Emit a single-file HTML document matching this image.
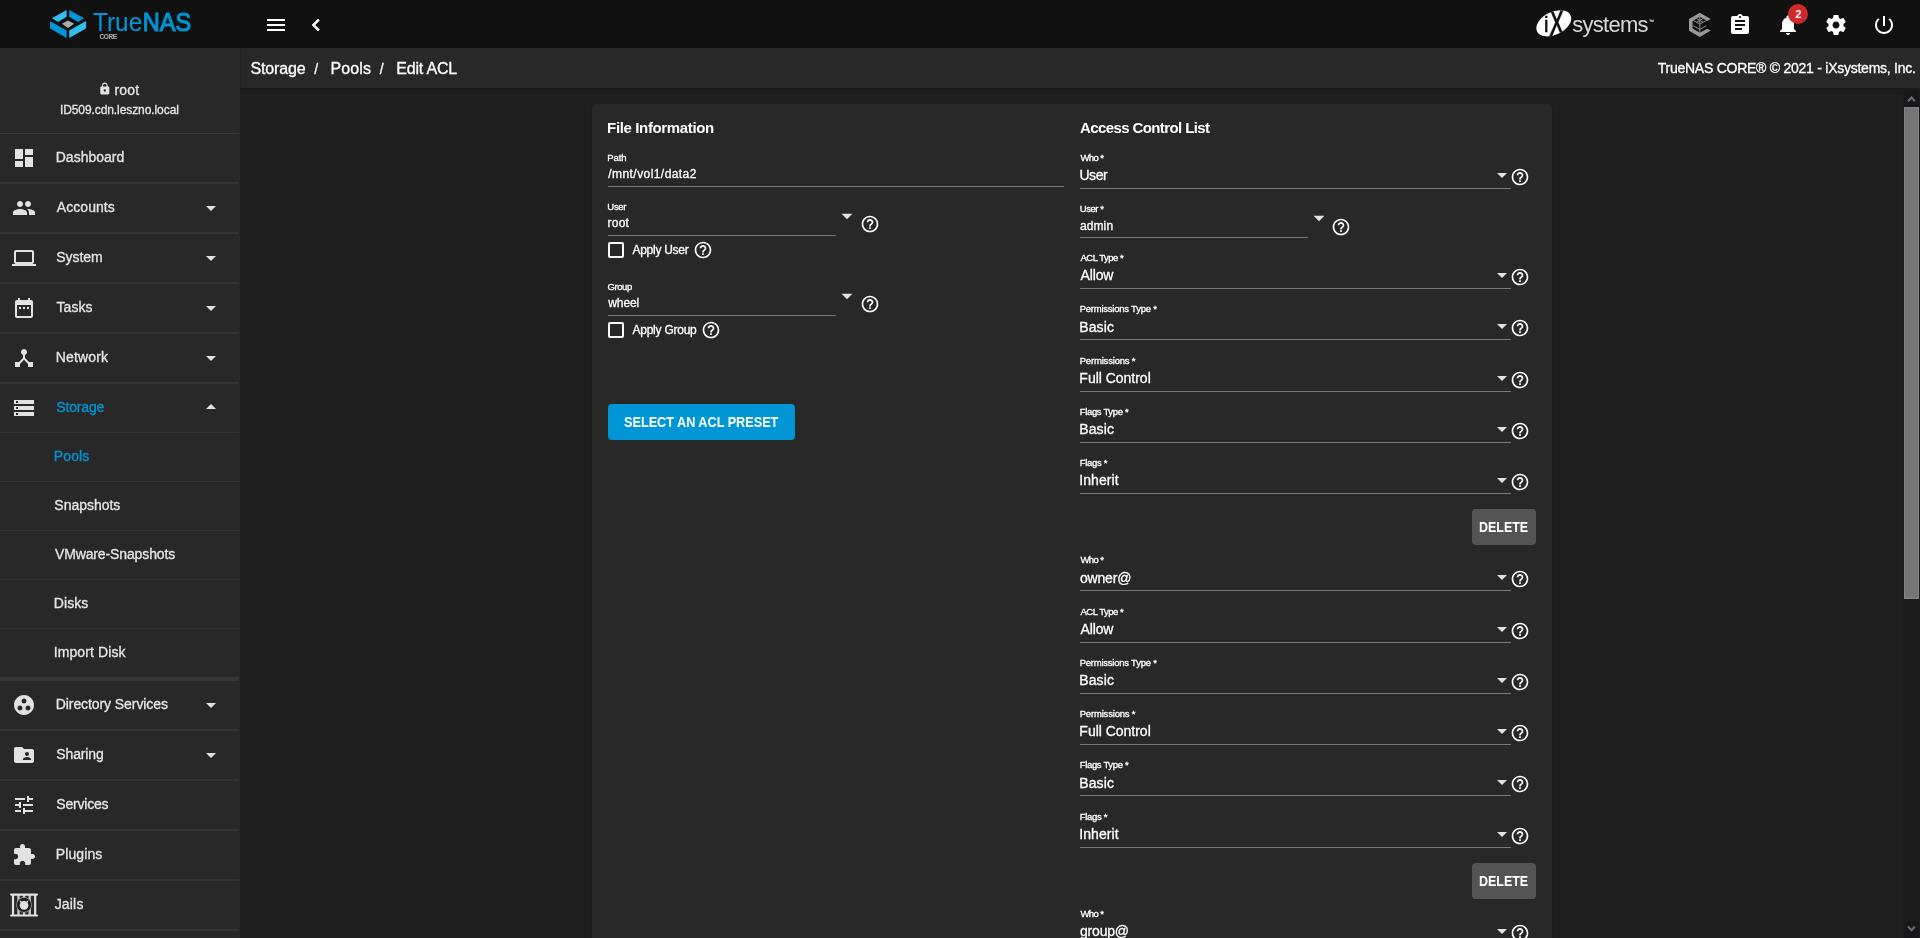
<!DOCTYPE html>
<html lang="en"><head><meta charset="utf-8"><title>TrueNAS - Edit ACL</title>
<style>
*{box-sizing:content-box}
html,body{margin:0;padding:0}
body{width:1920px;height:938px;overflow:hidden;position:relative;background:#1e1e1e;color:#fff;font-family:"Liberation Sans",sans-serif}
#bg,#app{position:absolute;left:0;top:0;width:1920px;height:938px}
#app{transform:translateZ(0)}
.t{position:absolute;white-space:nowrap;line-height:1;-webkit-text-stroke:0.3px currentColor}
.r,.i{position:absolute;display:block}
</style></head>
<body>
<div id="bg">
<div class="r" style="left:240px;top:48px;width:1680px;height:40px;background:#282828;box-shadow:0 1px 3px rgba(0,0,0,.35);"></div>
<div class="r" style="left:239.5px;top:48px;width:1.5px;height:40px;background:#242424;"></div>
<div class="r" style="left:0px;top:0px;width:1920px;height:48px;background:#111;"></div>
<div class="r" style="left:0px;top:48px;width:239.5px;height:890px;background:#282828;"></div>
<div class="r" style="left:592px;top:104px;width:960px;height:860px;background:#282828;border-radius:5px;box-shadow:0 2px 1px -1px rgba(0,0,0,.2),0 1px 1px 0 rgba(0,0,0,.14),0 1px 3px 0 rgba(0,0,0,.12);"></div>
<svg class="i" style="left:48px;top:8px" width="40" height="32" viewBox="48 8 40 32">
<polygon fill="#31beec" points="51.9,18.3 66.6,10 66.6,16.8 58.1,21.9"/>
<polygon fill="#0095d5" points="69.2,10 84.1,18.3 78.1,21.9 69.2,16.8"/>
<polygon fill="#0095d5" points="50,21.1 66.6,30.4 66.6,38.1 50,28.5"/>
<polygon fill="#31beec" points="69.2,30.4 86,21.1 86,28.5 69.2,38.1"/>
<polygon fill="#aeadae" points="61.9,23.8 67.9,20.4 74.1,23.8 67.9,27.9"/>
</svg>
<svg class="i" style="left:264px;top:13px" width="24" height="24" viewBox="0 0 24 24"><path fill="#fff" d="M3 18h18v-2H3v2zm0-5h18v-2H3v2zm0-7v2h18V6H3z"/></svg>
<svg class="i" style="left:303.500px;top:13px" width="24" height="24" viewBox="0 0 24 24"><path fill="#fff" stroke="#fff" stroke-width=".700" d="M15.41 7.41L14 6l-6 6 6 6 1.41-1.41L10.83 12z"/></svg>
<svg class="i" style="left:1534px;top:6px;transform:translateZ(0)" width="40" height="36" viewBox="1534 6 40 36">
<defs><clipPath id="ixc"><ellipse cx="1553.8" cy="23.3" rx="18.600" ry="11.400" transform="rotate(-26 1553.8 23.3)"/></clipPath></defs>
<ellipse cx="1553.8" cy="23.3" rx="18.600" ry="11.400" fill="#fff" transform="rotate(-26 1553.8 23.3)"/>
<g clip-path="url(#ixc)" font-family="Liberation Sans, sans-serif" fill="#111" stroke="#111" text-anchor="middle">
<text x="1546.300" y="31.900" font-size="22" stroke-width=".350">i</text>
<text transform="translate(1556.600 39.100) scale(.600 1)" x="0" y="0" font-size="46" stroke-width=".300">X</text>
</g>
</svg>
<svg class="i" style="left:1686px;top:10px" width="28" height="30" viewBox="1686 10 28 30">
<path fill="#999" d="M1699.800 12.700L1710.700 19L1707.300 20.950L1699.800 16.850L1692.600 21V28.600L1699.800 32.750L1707.300 28.650L1710.700 30.600L1699.800 36.900L1689 30.700V18.900Z"/>
<path fill="none" stroke="#8c8c8c" stroke-width="1" d="M1699.800 17V33.500M1693.200 20.400L1699.800 24.100L1706.400 20.400M1696.500 18.600L1703.100 22.200M1703.100 18.600L1696.500 22.200M1693.200 25.750L1699.800 29.400L1706.400 25.750"/>
</svg>
<svg class="i" style="left:1728px;top:13px" width="24" height="24" viewBox="0 0 24 24"><path fill="#fff" d="M19 3h-4.180C14.4 1.84 13.3 1 12 1c-1.3 0-2.4.84-2.82 2H5c-1.1 0-2 .9-2 2v14c0 1.1.9 2 2 2h14c1.1 0 2-.9 2-2V5c0-1.1-.9-2-2-2zm-7 0c.55 0 1 .45 1 1s-.45 1-1 1-1-.45-1-1 .45-1 1-1zm2 14H7v-2h7v2zm3-4H7v-2h10v2zm0-4H7V7h10v2z"/></svg>
<svg class="i" style="left:1776px;top:13px" width="24" height="24" viewBox="0 0 24 24"><path fill="#fff" d="M12 22c1.1 0 2-.9 2-2h-4c0 1.100.89 2 2 2zm6-6v-5c0-3.070-1.64-5.64-4.5-6.32V4c0-.83-.67-1.5-1.5-1.5s-1.5.67-1.5 1.5v.68C7.63 5.36 6 7.92 6 11v5l-2 2v1h16v-1l-2-2z"/></svg>
<div class="r" style="left:1787.8px;top:4px;width:20.4px;height:20.400px;border-radius:50%;background:#d1282c"></div>
<svg class="i" style="left:1824px;top:13px" width="24" height="24" viewBox="0 0 24 24"><path fill="#fff" d="M19.43 12.98c.04-.32.07-.64.07-.98s-.03-.66-.07-.98l2.110-1.65c.19-.15.24-.42.12-.64l-2-3.46c-.12-.22-.39-.3-.61-.22l-2.49 1c-.52-.4-1.08-.73-1.69-.98l-.38-2.65C14.460 2.18 14.25 2 14 2h-4c-.25 0-.46.18-.49.42l-.38 2.650c-.61.25-1.17.59-1.69.98l-2.490-1c-.23-.09-.49 0-.61.22l-2 3.460c-.13.22-.07.49.12.64l2.110 1.650c-.04.32-.07.65-.07.98s.03.66.07.98l-2.110 1.650c-.19.15-.24.42-.12.64l2 3.460c.12.22.39.3.61.22l2.490-1c.52.4 1.08.73 1.69.98l.38 2.650c.03.24.24.42.49.42h4c.25 0 .46-.18.49-.42l.38-2.650c.61-.25 1.17-.59 1.69-.98l2.490 1c.23.09.49 0 .61-.22l2-3.460c.12-.22.07-.49-.12-.64l-2.110-1.650zM12 15.500c-1.930 0-3.500-1.570-3.500-3.500s1.570-3.500 3.500-3.500 3.500 1.570 3.500 3.500-1.570 3.500-3.500 3.500z"/></svg>
<svg class="i" style="left:1872px;top:13px" width="24" height="24" viewBox="0 0 24 24"><path fill="#fff" d="M13 3h-2v10h2V3zm4.83 2.17l-1.42 1.42C17.99 7.86 19 9.81 19 12c0 3.87-3.13 7-7 7s-7-3.13-7-7c0-2.19 1.01-4.14 2.58-5.42L6.17 5.17C4.23 6.82 3 9.26 3 12c0 4.97 4.03 9 9 9s9-4.03 9-9c0-2.74-1.23-5.18-3.17-6.83z"/></svg>
<svg class="i" style="left:97.6px;top:81.9px" width="13.6" height="13.6" viewBox="0 0 24 24"><path fill="#e2e2e2" d="M18 8h-1V6c0-2.76-2.24-5-5-5S7 3.240 7 6v2H6c-1.1 0-2 .9-2 2v10c0 1.1.9 2 2 2h12c1.1 0 2-.9 2-2V10c0-1.1-.9-2-2-2zm-6 9c-1.1 0-2-.9-2-2s.9-2 2-2 2 .9 2 2-.9 2-2 2zm3.1-9H8.9V6c0-1.71 1.39-3.1 3.1-3.1 1.71 0 3.1 1.39 3.1 3.1v2z"/></svg>
<div class="r" style="left:0px;top:133px;width:239px;height:1px;background:#373737;"></div>
<svg class="i" style="left:12px;top:146px" width="24" height="24" viewBox="0 0 24 24"><path fill="#e2e2e2" d="M3 13h8V3H3v10zm0 8h8v-6H3v6zm10 0h8V11h-8v10zm0-18v6h8V3h-8z"/></svg>
<svg class="i" style="left:12px;top:196px" width="24" height="24" viewBox="0 0 24 24"><path fill="#e2e2e2" d="M16 11c1.66 0 2.99-1.34 2.99-3S17.66 5 16 5c-1.66 0-3 1.34-3 3s1.34 3 3 3zm-8 0c1.66 0 2.99-1.34 2.99-3S9.66 5 8 5C6.34 5 5 6.34 5 8s1.34 3 3 3zm0 2c-2.33 0-7 1.17-7 3.5V19h14v-2.5c0-2.33-4.67-3.5-7-3.5zm8 0c-.29 0-.62.02-.97.05 1.16.84 1.97 1.97 1.97 3.45V19h6v-2.5c0-2.33-4.67-3.5-7-3.5z"/></svg>
<svg class="i" style="left:199px;top:196px" width="24" height="24" viewBox="0 0 24 24"><path fill="#e2e2e2" d="M7 10l5 5 5-5z"/></svg>
<svg class="i" style="left:12px;top:246px" width="24" height="24" viewBox="0 0 24 24"><path fill="#e2e2e2" d="M20 18c1.1 0 2-.9 2-2V6c0-1.1-.9-2-2-2H4c-1.1 0-2 .9-2 2v10c0 1.1.9 2 2 2H0v2h24v-2h-4zM4 6h16v10H4V6z"/></svg>
<svg class="i" style="left:199px;top:246px" width="24" height="24" viewBox="0 0 24 24"><path fill="#e2e2e2" d="M7 10l5 5 5-5z"/></svg>
<svg class="i" style="left:12px;top:296px" width="24" height="24" viewBox="0 0 24 24"><path fill="#e2e2e2" d="M9 11H7v2h2v-2zm4 0h-2v2h2v-2zm4 0h-2v2h2v-2zm2-7h-1V2h-2v2H8V2H6v2H5c-1.11 0-1.99.9-1.99 2L3 20c0 1.1.89 2 2 2h14c1.1 0 2-.9 2-2V6c0-1.1-.9-2-2-2zm0 16H5V9h14v11z"/></svg>
<svg class="i" style="left:199px;top:296px" width="24" height="24" viewBox="0 0 24 24"><path fill="#e2e2e2" d="M7 10l5 5 5-5z"/></svg>
<svg class="i" style="left:12px;top:346px" width="24" height="24" viewBox="0 0 24 24"><path fill="#e2e2e2" d="M17 16l-4-4V8.82C14.16 8.4 15 7.3 15 6c0-1.66-1.34-3-3-3S9 4.34 9 6c0 1.3.84 2.4 2 2.82V12l-4 4H3v5h5v-3.05l4-4.2 4 4.2V21h5v-5h-4z"/></svg>
<svg class="i" style="left:199px;top:346px" width="24" height="24" viewBox="0 0 24 24"><path fill="#e2e2e2" d="M7 10l5 5 5-5z"/></svg>
<svg class="i" style="left:12px;top:396px" width="24" height="24" viewBox="0 0 24 24"><path fill="#e2e2e2" d="M2 20h20v-4H2v4zm2-3h2v2H4v-2zM2 4v4h20V4H2zm4 3H4V5h2v2zm-4 7h20v-4H2v4zm2-3h2v2H4v-2z"/></svg>
<svg class="i" style="left:199px;top:395px" width="24" height="24" viewBox="0 0 24 24"><path fill="#e2e2e2" d="M7 14l5-5 5 5z"/></svg>
<div class="r" style="left:0px;top:182px;width:239px;height:2px;background:#343434;"></div>
<div class="r" style="left:0px;top:232px;width:239px;height:2px;background:#343434;"></div>
<div class="r" style="left:0px;top:282px;width:239px;height:2px;background:#343434;"></div>
<div class="r" style="left:0px;top:332px;width:239px;height:2px;background:#343434;"></div>
<div class="r" style="left:0px;top:382px;width:239px;height:2px;background:#343434;"></div>
<div class="r" style="left:0px;top:432px;width:239px;height:1px;background:#343434;"></div>
<div class="r" style="left:0px;top:481px;width:239px;height:1px;background:#343434;"></div>
<div class="r" style="left:0px;top:530px;width:239px;height:1px;background:#343434;"></div>
<div class="r" style="left:0px;top:579px;width:239px;height:1px;background:#343434;"></div>
<div class="r" style="left:0px;top:628px;width:239px;height:1px;background:#343434;"></div>
<div class="r" style="left:0px;top:677px;width:239px;height:4px;background:#363636;"></div>
<svg class="i" style="left:12px;top:693px" width="24" height="24" viewBox="0 0 24 24"><path fill="#e2e2e2" d="M12 2C6.48 2 2 6.48 2 12s4.48 10 10 10 10-4.48 10-10S17.52 2 12 2zM8 17.5c-1.38 0-2.5-1.12-2.5-2.5s1.12-2.5 2.5-2.5 2.5 1.12 2.5 2.5-1.12 2.5-2.5 2.5zM9.5 8c0-1.38 1.12-2.5 2.5-2.5s2.5 1.12 2.5 2.5-1.12 2.5-2.5 2.5S9.5 9.38 9.5 8zm6.5 9.5c-1.38 0-2.5-1.12-2.5-2.5s1.12-2.5 2.5-2.5 2.5 1.12 2.5 2.5-1.12 2.5-2.5 2.5z"/></svg>
<svg class="i" style="left:199px;top:693px" width="24" height="24" viewBox="0 0 24 24"><path fill="#e2e2e2" d="M7 10l5 5 5-5z"/></svg>
<svg class="i" style="left:12px;top:743px" width="24" height="24" viewBox="0 0 24 24"><path fill="#e2e2e2" d="M20 6h-8l-2-2H4c-1.1 0-1.99.9-1.99 2L2 18c0 1.1.9 2 2 2h16c1.1 0 2-.9 2-2V8c0-1.1-.9-2-2-2zm-5 3c1.1 0 2 .9 2 2s-.9 2-2 2-2-.9-2-2 .9-2 2-2zm4 8h-8v-1c0-1.33 2.67-2 4-2s4 .67 4 2v1z"/></svg>
<svg class="i" style="left:199px;top:743px" width="24" height="24" viewBox="0 0 24 24"><path fill="#e2e2e2" d="M7 10l5 5 5-5z"/></svg>
<svg class="i" style="left:12px;top:793px" width="24" height="24" viewBox="0 0 24 24"><path fill="#e2e2e2" d="M3 17v2h6v-2H3zM3 5v2h10V5H3zm10 16v-2h8v-2h-8v-2h-2v6h2zM7 9v2H3v2h4v2h2V9H7zm14 4v-2H11v2h10zm-6-4h2V7h4V5h-4V3h-2v6z"/></svg>
<svg class="i" style="left:12px;top:843px" width="24" height="24" viewBox="0 0 24 24"><path fill="#e2e2e2" d="M20.5 11H19V7c0-1.1-.9-2-2-2h-4V3.5C13 2.12 11.88 1 10.5 1S8 2.12 8 3.5V5H4c-1.1 0-1.99.9-1.99 2v3.8H3.5c1.49 0 2.7 1.21 2.7 2.7s-1.21 2.7-2.7 2.7H2V20c0 1.1.9 2 2 2h3.8v-1.5c0-1.49 1.21-2.7 2.7-2.7 1.49 0 2.7 1.21 2.7 2.7V22H17c1.1 0 2-.9 2-2v-4h1.5c1.38 0 2.5-1.12 2.5-2.5S21.88 11 20.5 11z"/></svg>
<div class="r" style="left:0px;top:729px;width:239px;height:2px;background:#343434;"></div>
<div class="r" style="left:0px;top:779px;width:239px;height:2px;background:#343434;"></div>
<div class="r" style="left:0px;top:829px;width:239px;height:2px;background:#343434;"></div>
<div class="r" style="left:0px;top:879px;width:239px;height:2px;background:#343434;"></div>
<div class="r" style="left:0px;top:929px;width:239px;height:2px;background:#343434;"></div>
<svg class="i" style="left:8px;top:890px" width="32" height="30" viewBox="8 890 32 30">
<g fill="#e2e2e2">
<rect x="11.900" y="895" width="2.200" height="20"/>
<rect x="17.300" y="895" width="2.400" height="20" fill="#c9c9c9"/>
<rect x="22.900" y="895" width="2.300" height="20" fill="#c9c9c9"/>
<rect x="28.500" y="895" width="2.400" height="20" fill="#c9c9c9"/>
<rect x="34.050" y="895" width="2.200" height="20"/>
<rect x="10" y="893.500" width="28.100" height="2.200" rx="1.100"/>
<rect x="10" y="914.400" width="28.100" height="2.200" rx="1.100"/>
</g>
<circle cx="24.050" cy="904.900" r="7.500" fill="#1c1c1c" stroke="#c4c4c4" stroke-width=".600"/>
<path fill="#e2e2e2" d="M19.600 900.600l2.300 .700l-1.500 1.800zM28.500 900.600l-2.300 .700l1.500 1.800z"/>
<circle cx="24.050" cy="905.300" r="4.350" fill="#e2e2e2"/>
</svg>
<div class="r" style="left:1903px;top:88px;width:17px;height:850px;background:#1c1c1c;"></div>
<div class="r" style="left:1904px;top:90px;width:15px;height:17px;background:#18181a;"></div>
<div class="r" style="left:1904px;top:921px;width:15px;height:17px;background:#18181a;"></div>
<div class="r" style="left:1904px;top:107px;width:13px;height:490px;background:#767676;border:1px solid #848484;"></div>
<svg class="i" style="left:1904px;top:90px" width="15" height="17" viewBox="1904 90 15 17"><path d="M1908 101.200l3.450-3.600 3.450 3.600" fill="none" stroke="#6a6a6a" stroke-width="2.100"/></svg>
<svg class="i" style="left:1904px;top:921px" width="15" height="17" viewBox="1904 921 15 17"><path d="M1908 926.600l3.450 3.600 3.450-3.600" fill="none" stroke="#6a6a6a" stroke-width="2.100"/></svg>
<div class="r" style="left:608px;top:186px;width:456px;height:1px;background:#777;"></div>
<div class="r" style="left:608px;top:235px;width:228px;height:1px;background:#777;"></div>
<svg class="i" style="left:834.4px;top:202.9px" width="26" height="26" viewBox="0 0 24 24"><path fill="#e2e2e2" d="M7 10l5 5 5-5z"/></svg>
<svg class="i" style="left:859.8px;top:214.0px" width="20" height="20" viewBox="0 0 24 24"><path fill="#fff" d="M11 18h2v-2h-2v2zm1-16C6.48 2 2 6.48 2 12s4.48 10 10 10 10-4.48 10-10S17.52 2 12 2zm0 18c-4.41 0-8-3.59-8-8s3.59-8 8-8 8 3.59 8 8-3.59 8-8 8zm0-14c-2.21 0-4 1.79-4 4h2c0-1.1.9-2 2-2s2 .9 2 2c0 2-3 1.75-3 5h2c0-2.25 3-2.5 3-5 0-2.21-1.79-4-4-4z"/></svg>
<div class="r" style="left:608px;top:315px;width:228px;height:1px;background:#777;"></div>
<svg class="i" style="left:834.4px;top:282.9px" width="26" height="26" viewBox="0 0 24 24"><path fill="#e2e2e2" d="M7 10l5 5 5-5z"/></svg>
<svg class="i" style="left:859.8px;top:294.0px" width="20" height="20" viewBox="0 0 24 24"><path fill="#fff" d="M11 18h2v-2h-2v2zm1-16C6.48 2 2 6.48 2 12s4.48 10 10 10 10-4.48 10-10S17.52 2 12 2zm0 18c-4.41 0-8-3.59-8-8s3.59-8 8-8 8 3.59 8 8-3.59 8-8 8zm0-14c-2.21 0-4 1.79-4 4h2c0-1.1.9-2 2-2s2 .9 2 2c0 2-3 1.75-3 5h2c0-2.25 3-2.5 3-5 0-2.21-1.79-4-4-4z"/></svg>
<div class="r" style="left:608px;top:242px;width:12px;height:12px;border:2px solid #fff;border-radius:2px"></div>
<svg class="i" style="left:692.6px;top:240.0px" width="20" height="20" viewBox="0 0 24 24"><path fill="#fff" d="M11 18h2v-2h-2v2zm1-16C6.48 2 2 6.48 2 12s4.48 10 10 10 10-4.48 10-10S17.52 2 12 2zm0 18c-4.41 0-8-3.59-8-8s3.59-8 8-8 8 3.59 8 8-3.59 8-8 8zm0-14c-2.21 0-4 1.79-4 4h2c0-1.1.9-2 2-2s2 .9 2 2c0 2-3 1.75-3 5h2c0-2.25 3-2.5 3-5 0-2.21-1.79-4-4-4z"/></svg>
<div class="r" style="left:608px;top:322px;width:12px;height:12px;border:2px solid #fff;border-radius:2px"></div>
<svg class="i" style="left:700.6px;top:320.0px" width="20" height="20" viewBox="0 0 24 24"><path fill="#fff" d="M11 18h2v-2h-2v2zm1-16C6.48 2 2 6.48 2 12s4.48 10 10 10 10-4.48 10-10S17.52 2 12 2zm0 18c-4.41 0-8-3.59-8-8s3.59-8 8-8 8 3.59 8 8-3.59 8-8 8zm0-14c-2.21 0-4 1.79-4 4h2c0-1.1.9-2 2-2s2 .9 2 2c0 2-3 1.75-3 5h2c0-2.25 3-2.5 3-5 0-2.21-1.79-4-4-4z"/></svg>
<div class="r" style="left:608px;top:404px;width:187px;height:36px;background:#0095d5;border-radius:4px;"></div>
<div class="r" style="left:1080px;top:188px;width:431px;height:1px;background:#777;"></div>
<div class="r" style="left:1497px;top:173px;width:0;height:0;border-left:5px solid transparent;border-right:5px solid transparent;border-top:5px solid #e2e2e2"></div>
<svg class="i" style="left:1510.1px;top:167.0px" width="20" height="20" viewBox="0 0 24 24"><path fill="#fff" d="M11 18h2v-2h-2v2zm1-16C6.48 2 2 6.48 2 12s4.48 10 10 10 10-4.48 10-10S17.52 2 12 2zm0 18c-4.41 0-8-3.59-8-8s3.59-8 8-8 8 3.59 8 8-3.59 8-8 8zm0-14c-2.21 0-4 1.79-4 4h2c0-1.1.9-2 2-2s2 .9 2 2c0 2-3 1.75-3 5h2c0-2.25 3-2.5 3-5 0-2.21-1.79-4-4-4z"/></svg>
<div class="r" style="left:1080px;top:237px;width:228px;height:1px;background:#777;"></div>
<svg class="i" style="left:1306.1px;top:205px" width="26" height="26" viewBox="0 0 24 24"><path fill="#e2e2e2" d="M7 10l5 5 5-5z"/></svg>
<svg class="i" style="left:1331.0px;top:217.0px" width="20" height="20" viewBox="0 0 24 24"><path fill="#fff" d="M11 18h2v-2h-2v2zm1-16C6.48 2 2 6.48 2 12s4.48 10 10 10 10-4.48 10-10S17.52 2 12 2zm0 18c-4.41 0-8-3.59-8-8s3.59-8 8-8 8 3.59 8 8-3.59 8-8 8zm0-14c-2.21 0-4 1.79-4 4h2c0-1.1.9-2 2-2s2 .9 2 2c0 2-3 1.75-3 5h2c0-2.25 3-2.5 3-5 0-2.21-1.79-4-4-4z"/></svg>
<div class="r" style="left:1080px;top:288px;width:431px;height:1px;background:#777;"></div>
<div class="r" style="left:1497px;top:273px;width:0;height:0;border-left:5px solid transparent;border-right:5px solid transparent;border-top:5px solid #e2e2e2"></div>
<svg class="i" style="left:1510.1px;top:267.0px" width="20" height="20" viewBox="0 0 24 24"><path fill="#fff" d="M11 18h2v-2h-2v2zm1-16C6.48 2 2 6.48 2 12s4.48 10 10 10 10-4.48 10-10S17.52 2 12 2zm0 18c-4.41 0-8-3.59-8-8s3.59-8 8-8 8 3.59 8 8-3.59 8-8 8zm0-14c-2.21 0-4 1.79-4 4h2c0-1.1.9-2 2-2s2 .9 2 2c0 2-3 1.75-3 5h2c0-2.25 3-2.5 3-5 0-2.21-1.79-4-4-4z"/></svg>
<div class="r" style="left:1080px;top:339px;width:431px;height:1px;background:#777;"></div>
<div class="r" style="left:1497px;top:324px;width:0;height:0;border-left:5px solid transparent;border-right:5px solid transparent;border-top:5px solid #e2e2e2"></div>
<svg class="i" style="left:1510.1px;top:318.0px" width="20" height="20" viewBox="0 0 24 24"><path fill="#fff" d="M11 18h2v-2h-2v2zm1-16C6.48 2 2 6.48 2 12s4.48 10 10 10 10-4.48 10-10S17.52 2 12 2zm0 18c-4.41 0-8-3.59-8-8s3.59-8 8-8 8 3.59 8 8-3.59 8-8 8zm0-14c-2.21 0-4 1.79-4 4h2c0-1.1.9-2 2-2s2 .9 2 2c0 2-3 1.75-3 5h2c0-2.25 3-2.5 3-5 0-2.21-1.79-4-4-4z"/></svg>
<div class="r" style="left:1080px;top:391px;width:431px;height:1px;background:#777;"></div>
<div class="r" style="left:1497px;top:376px;width:0;height:0;border-left:5px solid transparent;border-right:5px solid transparent;border-top:5px solid #e2e2e2"></div>
<svg class="i" style="left:1510.1px;top:370.0px" width="20" height="20" viewBox="0 0 24 24"><path fill="#fff" d="M11 18h2v-2h-2v2zm1-16C6.48 2 2 6.48 2 12s4.48 10 10 10 10-4.48 10-10S17.52 2 12 2zm0 18c-4.41 0-8-3.59-8-8s3.59-8 8-8 8 3.59 8 8-3.59 8-8 8zm0-14c-2.21 0-4 1.79-4 4h2c0-1.1.9-2 2-2s2 .9 2 2c0 2-3 1.75-3 5h2c0-2.25 3-2.5 3-5 0-2.21-1.79-4-4-4z"/></svg>
<div class="r" style="left:1080px;top:442px;width:431px;height:1px;background:#777;"></div>
<div class="r" style="left:1497px;top:427px;width:0;height:0;border-left:5px solid transparent;border-right:5px solid transparent;border-top:5px solid #e2e2e2"></div>
<svg class="i" style="left:1510.1px;top:421.0px" width="20" height="20" viewBox="0 0 24 24"><path fill="#fff" d="M11 18h2v-2h-2v2zm1-16C6.48 2 2 6.48 2 12s4.48 10 10 10 10-4.48 10-10S17.52 2 12 2zm0 18c-4.41 0-8-3.59-8-8s3.59-8 8-8 8 3.59 8 8-3.59 8-8 8zm0-14c-2.21 0-4 1.79-4 4h2c0-1.1.9-2 2-2s2 .9 2 2c0 2-3 1.75-3 5h2c0-2.25 3-2.5 3-5 0-2.21-1.79-4-4-4z"/></svg>
<div class="r" style="left:1080px;top:493px;width:431px;height:1px;background:#777;"></div>
<div class="r" style="left:1497px;top:478px;width:0;height:0;border-left:5px solid transparent;border-right:5px solid transparent;border-top:5px solid #e2e2e2"></div>
<svg class="i" style="left:1510.1px;top:472.0px" width="20" height="20" viewBox="0 0 24 24"><path fill="#fff" d="M11 18h2v-2h-2v2zm1-16C6.48 2 2 6.48 2 12s4.48 10 10 10 10-4.48 10-10S17.52 2 12 2zm0 18c-4.41 0-8-3.59-8-8s3.59-8 8-8 8 3.59 8 8-3.59 8-8 8zm0-14c-2.21 0-4 1.79-4 4h2c0-1.1.9-2 2-2s2 .9 2 2c0 2-3 1.75-3 5h2c0-2.25 3-2.5 3-5 0-2.21-1.79-4-4-4z"/></svg>
<div class="r" style="left:1472px;top:509px;width:64px;height:36px;background:#545454;border-radius:4px;"></div>
<div class="r" style="left:1080px;top:590px;width:431px;height:1px;background:#777;"></div>
<div class="r" style="left:1497px;top:575px;width:0;height:0;border-left:5px solid transparent;border-right:5px solid transparent;border-top:5px solid #e2e2e2"></div>
<svg class="i" style="left:1510.1px;top:569.0px" width="20" height="20" viewBox="0 0 24 24"><path fill="#fff" d="M11 18h2v-2h-2v2zm1-16C6.48 2 2 6.48 2 12s4.48 10 10 10 10-4.48 10-10S17.52 2 12 2zm0 18c-4.41 0-8-3.59-8-8s3.59-8 8-8 8 3.59 8 8-3.59 8-8 8zm0-14c-2.21 0-4 1.79-4 4h2c0-1.1.9-2 2-2s2 .9 2 2c0 2-3 1.75-3 5h2c0-2.25 3-2.5 3-5 0-2.21-1.79-4-4-4z"/></svg>
<div class="r" style="left:1080px;top:642px;width:431px;height:1px;background:#777;"></div>
<div class="r" style="left:1497px;top:627px;width:0;height:0;border-left:5px solid transparent;border-right:5px solid transparent;border-top:5px solid #e2e2e2"></div>
<svg class="i" style="left:1510.1px;top:621.0px" width="20" height="20" viewBox="0 0 24 24"><path fill="#fff" d="M11 18h2v-2h-2v2zm1-16C6.48 2 2 6.48 2 12s4.48 10 10 10 10-4.48 10-10S17.52 2 12 2zm0 18c-4.41 0-8-3.59-8-8s3.59-8 8-8 8 3.59 8 8-3.59 8-8 8zm0-14c-2.21 0-4 1.79-4 4h2c0-1.1.9-2 2-2s2 .9 2 2c0 2-3 1.75-3 5h2c0-2.25 3-2.5 3-5 0-2.21-1.79-4-4-4z"/></svg>
<div class="r" style="left:1080px;top:693px;width:431px;height:1px;background:#777;"></div>
<div class="r" style="left:1497px;top:678px;width:0;height:0;border-left:5px solid transparent;border-right:5px solid transparent;border-top:5px solid #e2e2e2"></div>
<svg class="i" style="left:1510.1px;top:672.0px" width="20" height="20" viewBox="0 0 24 24"><path fill="#fff" d="M11 18h2v-2h-2v2zm1-16C6.48 2 2 6.48 2 12s4.48 10 10 10 10-4.48 10-10S17.52 2 12 2zm0 18c-4.41 0-8-3.59-8-8s3.59-8 8-8 8 3.59 8 8-3.59 8-8 8zm0-14c-2.21 0-4 1.79-4 4h2c0-1.1.9-2 2-2s2 .9 2 2c0 2-3 1.75-3 5h2c0-2.25 3-2.5 3-5 0-2.21-1.79-4-4-4z"/></svg>
<div class="r" style="left:1080px;top:744px;width:431px;height:1px;background:#777;"></div>
<div class="r" style="left:1497px;top:729px;width:0;height:0;border-left:5px solid transparent;border-right:5px solid transparent;border-top:5px solid #e2e2e2"></div>
<svg class="i" style="left:1510.1px;top:723.0px" width="20" height="20" viewBox="0 0 24 24"><path fill="#fff" d="M11 18h2v-2h-2v2zm1-16C6.48 2 2 6.48 2 12s4.48 10 10 10 10-4.48 10-10S17.52 2 12 2zm0 18c-4.41 0-8-3.59-8-8s3.59-8 8-8 8 3.59 8 8-3.59 8-8 8zm0-14c-2.21 0-4 1.79-4 4h2c0-1.1.9-2 2-2s2 .9 2 2c0 2-3 1.75-3 5h2c0-2.25 3-2.5 3-5 0-2.21-1.79-4-4-4z"/></svg>
<div class="r" style="left:1080px;top:795px;width:431px;height:1px;background:#777;"></div>
<div class="r" style="left:1497px;top:780px;width:0;height:0;border-left:5px solid transparent;border-right:5px solid transparent;border-top:5px solid #e2e2e2"></div>
<svg class="i" style="left:1510.1px;top:774.0px" width="20" height="20" viewBox="0 0 24 24"><path fill="#fff" d="M11 18h2v-2h-2v2zm1-16C6.48 2 2 6.48 2 12s4.48 10 10 10 10-4.48 10-10S17.52 2 12 2zm0 18c-4.41 0-8-3.59-8-8s3.59-8 8-8 8 3.59 8 8-3.59 8-8 8zm0-14c-2.21 0-4 1.79-4 4h2c0-1.1.9-2 2-2s2 .9 2 2c0 2-3 1.75-3 5h2c0-2.25 3-2.5 3-5 0-2.21-1.79-4-4-4z"/></svg>
<div class="r" style="left:1080px;top:847px;width:431px;height:1px;background:#777;"></div>
<div class="r" style="left:1497px;top:832px;width:0;height:0;border-left:5px solid transparent;border-right:5px solid transparent;border-top:5px solid #e2e2e2"></div>
<svg class="i" style="left:1510.1px;top:826.0px" width="20" height="20" viewBox="0 0 24 24"><path fill="#fff" d="M11 18h2v-2h-2v2zm1-16C6.48 2 2 6.48 2 12s4.48 10 10 10 10-4.48 10-10S17.52 2 12 2zm0 18c-4.41 0-8-3.59-8-8s3.59-8 8-8 8 3.59 8 8-3.59 8-8 8zm0-14c-2.21 0-4 1.79-4 4h2c0-1.1.9-2 2-2s2 .9 2 2c0 2-3 1.75-3 5h2c0-2.25 3-2.5 3-5 0-2.21-1.79-4-4-4z"/></svg>
<div class="r" style="left:1472px;top:863px;width:64px;height:36px;background:#545454;border-radius:4px;"></div>
<div class="r" style="left:1080px;top:944px;width:431px;height:1px;background:#777;"></div>
<div class="r" style="left:1497px;top:929px;width:0;height:0;border-left:5px solid transparent;border-right:5px solid transparent;border-top:5px solid #e2e2e2"></div>
<svg class="i" style="left:1510.1px;top:923.0px" width="20" height="20" viewBox="0 0 24 24"><path fill="#fff" d="M11 18h2v-2h-2v2zm1-16C6.48 2 2 6.48 2 12s4.48 10 10 10 10-4.48 10-10S17.52 2 12 2zm0 18c-4.41 0-8-3.59-8-8s3.59-8 8-8 8 3.59 8 8-3.59 8-8 8zm0-14c-2.21 0-4 1.79-4 4h2c0-1.1.9-2 2-2s2 .9 2 2c0 2-3 1.75-3 5h2c0-2.25 3-2.5 3-5 0-2.21-1.79-4-4-4z"/></svg>
</div>
<div id="app">
<div class="t" style="left:93.45px;top:9px;font-size:26.5px;color:#0095d5;transform:scaleX(0.9200);transform-origin:0 0;-webkit-text-stroke:0.150px">True<span style="display:inline-block;margin-left:0.09px;transform:scaleX(0.9670);transform-origin:0 0;-webkit-text-stroke:1.100px">NAS</span></div>
<div class="t" style="left:99.54px;top:34px;font-size:6.5px;letter-spacing:-0.422px;font-weight:700;-webkit-text-stroke:0;color:#b4b4b4;">CORE</div>
<div class="t" style="left:1572.30px;top:14px;font-size:22px;letter-spacing:-0.735px;color:#d8d8d8;-webkit-text-stroke:0;">systems</div>
<div class="t" style="left:1649.04px;top:19px;font-size:5px;color:#bbb;">™</div>
<div class="t" style="left:1795.21px;top:9px;font-size:11px;font-weight:700;-webkit-text-stroke:0;">2</div>
<div class="t" style="left:250.48px;top:61px;font-size:16px;letter-spacing:-0.140px;">Storage</div>
<div class="t" style="left:314.30px;top:62px;font-size:14px;">/</div>
<div class="t" style="left:330.48px;top:61px;font-size:16px;letter-spacing:0.110px;">Pools</div>
<div class="t" style="left:379.70px;top:62px;font-size:14px;">/</div>
<div class="t" style="left:396.18px;top:61px;font-size:16px;letter-spacing:-0.171px;">Edit ACL</div>
<div class="t" style="left:1657.78px;top:61px;font-size:14px;letter-spacing:-0.255px;">TrueNAS CORE® © 2021 - iXsystems, Inc.</div>
<div class="t" style="left:114.39px;top:83px;font-size:14px;letter-spacing:0.200px;color:#e6e6e6;">root</div>
<div class="t" style="left:59.89px;top:104px;font-size:12px;letter-spacing:-0.082px;color:#e6e6e6;">ID509.cdn.leszno.local</div>
<div class="t" style="left:55.74px;top:150px;font-size:14px;color:#e6e6e6;">Dashboard</div>
<div class="t" style="left:56.87px;top:200px;font-size:14px;letter-spacing:0.050px;color:#e6e6e6;">Accounts</div>
<div class="t" style="left:56.27px;top:250px;font-size:14px;letter-spacing:-0.043px;color:#e6e6e6;">System</div>
<div class="t" style="left:56.59px;top:300px;font-size:14px;letter-spacing:0.034px;color:#e6e6e6;">Tasks</div>
<div class="t" style="left:55.74px;top:350px;font-size:14px;letter-spacing:0.168px;color:#e6e6e6;">Network</div>
<div class="t" style="left:56.27px;top:400px;font-size:14px;letter-spacing:-0.152px;color:#0095d5;">Storage</div>
<div class="t" style="left:53.84px;top:449px;font-size:14px;letter-spacing:0.103px;color:#0095d5;">Pools</div>
<div class="t" style="left:54.37px;top:498px;font-size:14px;letter-spacing:-0.029px;color:#e6e6e6;">Snapshots</div>
<div class="t" style="left:54.93px;top:547px;font-size:14px;letter-spacing:-0.122px;color:#e6e6e6;">VMware-Snapshots</div>
<div class="t" style="left:53.84px;top:596px;font-size:14px;letter-spacing:0.054px;color:#e6e6e6;">Disks</div>
<div class="t" style="left:53.70px;top:645px;font-size:14px;letter-spacing:0.109px;color:#e6e6e6;">Import Disk</div>
<div class="t" style="left:55.74px;top:697px;font-size:14px;letter-spacing:-0.078px;color:#e6e6e6;">Directory Services</div>
<div class="t" style="left:56.27px;top:747px;font-size:14px;letter-spacing:-0.121px;color:#e6e6e6;">Sharing</div>
<div class="t" style="left:56.27px;top:797px;font-size:14px;letter-spacing:-0.196px;color:#e6e6e6;">Services</div>
<div class="t" style="left:55.74px;top:847px;font-size:14px;letter-spacing:0.104px;color:#e6e6e6;">Plugins</div>
<div class="t" style="left:54.69px;top:897px;font-size:14px;letter-spacing:0.175px;color:#e6e6e6;">Jails</div>
<div class="t" style="left:607.09px;top:120px;font-size:15px;letter-spacing:-0.359px;font-weight:700;-webkit-text-stroke:0;">File Information</div>
<div class="t" style="left:607.32px;top:153px;font-size:9.5px;letter-spacing:-0.082px;">Path</div>
<div class="t" style="left:608.30px;top:168px;font-size:12px;letter-spacing:0.432px;">/mnt/vol1/data2</div>
<div class="t" style="left:607.36px;top:202px;font-size:9.5px;letter-spacing:-0.322px;">User</div>
<div class="t" style="left:607.52px;top:217px;font-size:12px;letter-spacing:0.233px;">root</div>
<div class="t" style="left:607.62px;top:282px;font-size:9.5px;letter-spacing:-0.458px;">Group</div>
<div class="t" style="left:608.33px;top:297px;font-size:12px;letter-spacing:-0.143px;">wheel</div>
<div class="t" style="left:632.47px;top:244px;font-size:12px;letter-spacing:-0.274px;">Apply User</div>
<div class="t" style="left:632.47px;top:324px;font-size:12px;letter-spacing:-0.238px;">Apply Group</div>
<div class="t" style="left:623.92px;top:415px;font-size:14px;transform:scaleX(0.9045);transform-origin:0 0;font-weight:700;-webkit-text-stroke:0;">SELECT AN ACL PRESET</div>
<div class="t" style="left:1080.03px;top:120px;font-size:15px;letter-spacing:-0.605px;font-weight:700;-webkit-text-stroke:0;">Access Control List</div>
<div class="t" style="left:1080.45px;top:153px;font-size:9.5px;letter-spacing:-0.593px;">Who *</div>
<div class="t" style="left:1079.41px;top:168px;font-size:14px;letter-spacing:-0.415px;">User</div>
<div class="t" style="left:1079.76px;top:204px;font-size:9.5px;letter-spacing:-0.442px;">User *</div>
<div class="t" style="left:1079.99px;top:220px;font-size:12px;letter-spacing:0.097px;">admin</div>
<div class="t" style="left:1080.48px;top:253px;font-size:9.5px;letter-spacing:-0.473px;">ACL Type *</div>
<div class="t" style="left:1080.46px;top:268px;font-size:14px;letter-spacing:-0.115px;">Allow</div>
<div class="t" style="left:1079.72px;top:304px;font-size:9.5px;letter-spacing:-0.236px;">Permissions Type *</div>
<div class="t" style="left:1079.35px;top:320px;font-size:14px;letter-spacing:0.078px;">Basic</div>
<div class="t" style="left:1079.72px;top:356px;font-size:9.5px;letter-spacing:-0.187px;">Permissions *</div>
<div class="t" style="left:1079.35px;top:371px;font-size:14px;letter-spacing:-0.016px;">Full Control</div>
<div class="t" style="left:1079.72px;top:407px;font-size:9.5px;letter-spacing:-0.335px;">Flags Type *</div>
<div class="t" style="left:1079.35px;top:422px;font-size:14px;letter-spacing:0.078px;">Basic</div>
<div class="t" style="left:1079.72px;top:458px;font-size:9.5px;letter-spacing:-0.303px;">Flags *</div>
<div class="t" style="left:1079.20px;top:473px;font-size:14px;letter-spacing:0.080px;">Inherit</div>
<div class="t" style="left:1479.16px;top:520px;font-size:14px;transform:scaleX(0.8897);transform-origin:0 0;font-weight:700;-webkit-text-stroke:0;">DELETE</div>
<div class="t" style="left:1080.45px;top:555px;font-size:9.5px;letter-spacing:-0.593px;">Who *</div>
<div class="t" style="left:1079.90px;top:571px;font-size:14px;letter-spacing:-0.168px;">owner@</div>
<div class="t" style="left:1080.48px;top:607px;font-size:9.5px;letter-spacing:-0.473px;">ACL Type *</div>
<div class="t" style="left:1080.46px;top:622px;font-size:14px;letter-spacing:-0.115px;">Allow</div>
<div class="t" style="left:1079.72px;top:658px;font-size:9.5px;letter-spacing:-0.236px;">Permissions Type *</div>
<div class="t" style="left:1079.35px;top:673px;font-size:14px;letter-spacing:0.078px;">Basic</div>
<div class="t" style="left:1079.72px;top:709px;font-size:9.5px;letter-spacing:-0.187px;">Permissions *</div>
<div class="t" style="left:1079.35px;top:724px;font-size:14px;letter-spacing:-0.016px;">Full Control</div>
<div class="t" style="left:1079.72px;top:760px;font-size:9.5px;letter-spacing:-0.335px;">Flags Type *</div>
<div class="t" style="left:1079.35px;top:776px;font-size:14px;letter-spacing:0.078px;">Basic</div>
<div class="t" style="left:1079.72px;top:812px;font-size:9.5px;letter-spacing:-0.303px;">Flags *</div>
<div class="t" style="left:1079.20px;top:827px;font-size:14px;letter-spacing:0.080px;">Inherit</div>
<div class="t" style="left:1479.16px;top:874px;font-size:14px;transform:scaleX(0.8897);transform-origin:0 0;font-weight:700;-webkit-text-stroke:0;">DELETE</div>
<div class="t" style="left:1080.45px;top:909px;font-size:9.5px;letter-spacing:-0.593px;">Who *</div>
<div class="t" style="left:1079.90px;top:924px;font-size:14px;letter-spacing:-0.166px;">group@</div>
</div>
</body></html>
